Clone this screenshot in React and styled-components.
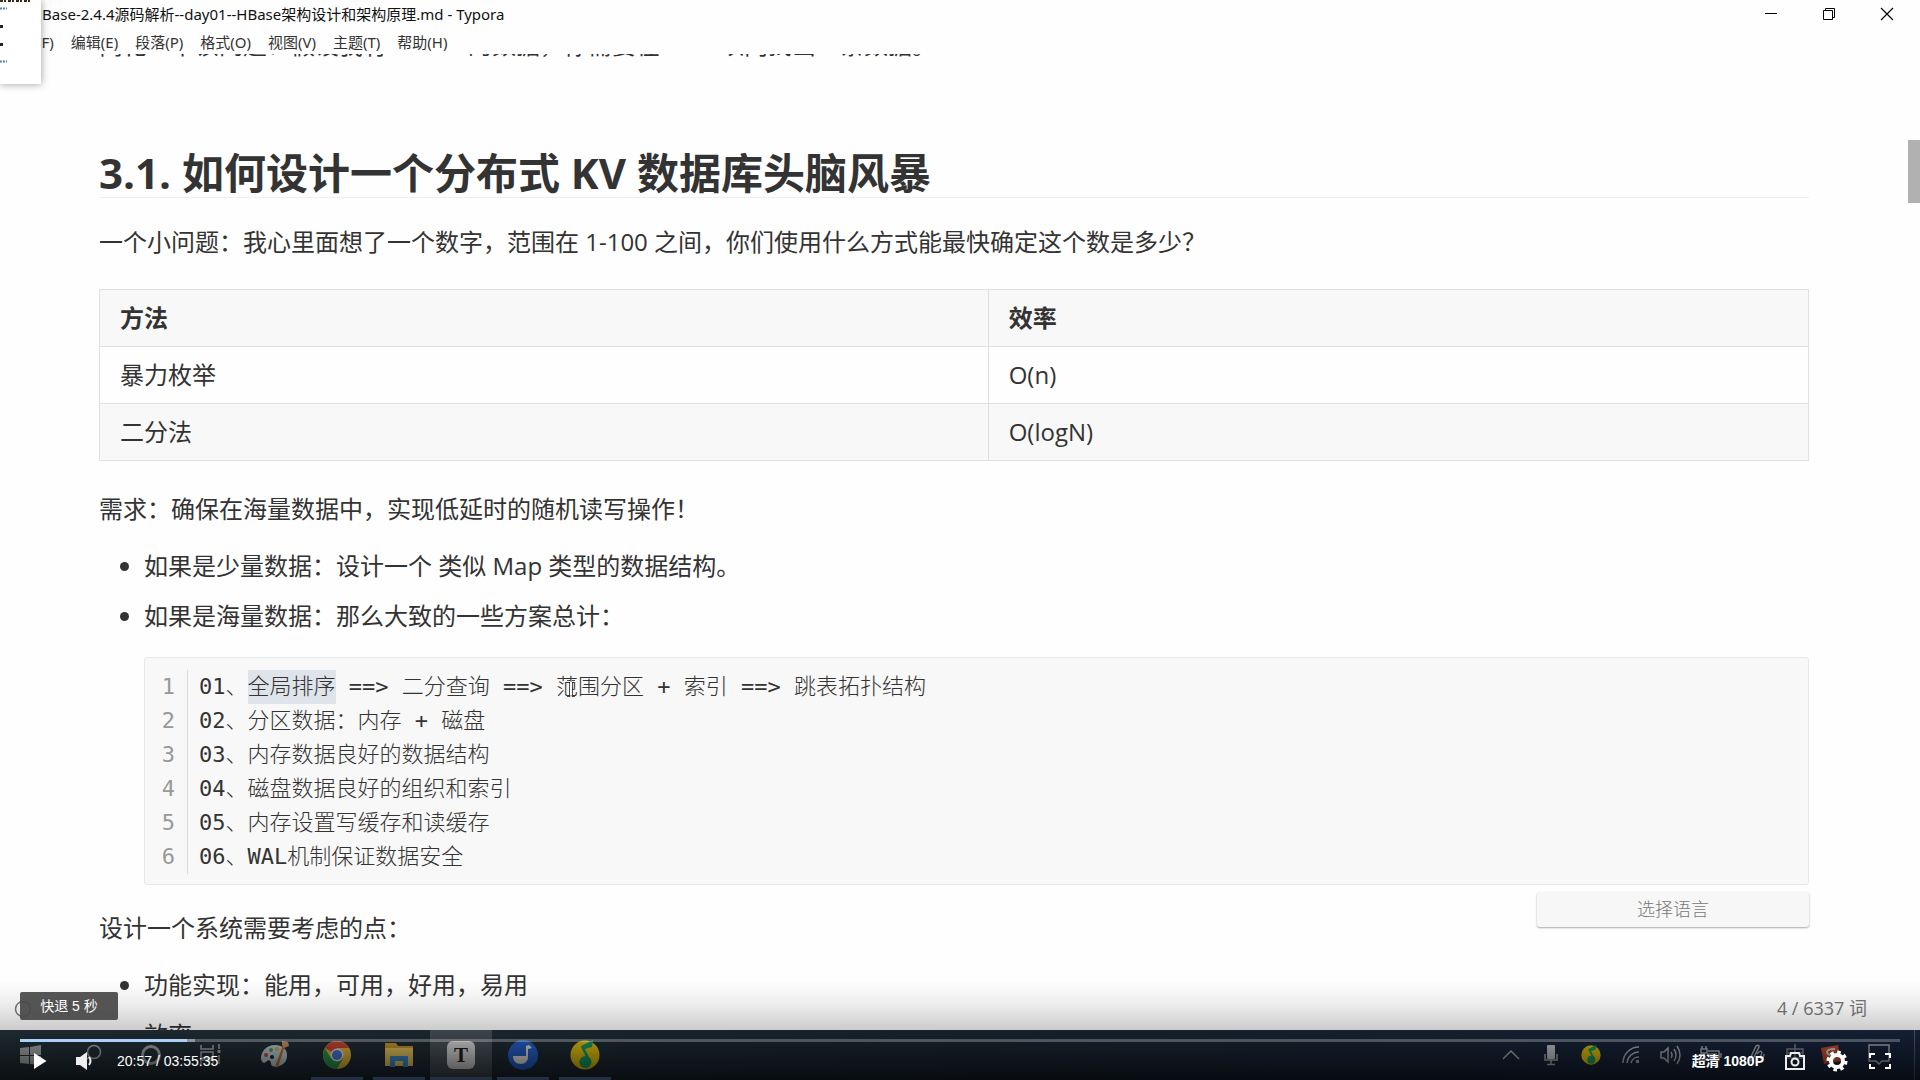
import React from 'react';
import styled, { createGlobalStyle, css } from 'styled-components';

const GlobalStyle = createGlobalStyle`
  * {
    box-sizing: border-box;
  }
  body {
    margin: 0;
    background: #fefefe;
    color: #333;
    font-family: "Open Sans", "Noto Sans CJK SC", sans-serif;
  }
  button {
    border: 0;
    padding: 0;
    background: none;
    color: inherit;
    font: inherit;
    display: flex;
    align-items: center;
    justify-content: center;
  }
`;

const Screen = styled.div`
  position: relative;
  display: flex;
  flex-direction: column;
  height: 100vh;
  overflow: hidden;
`;

/* ---------- editor window ---------- */

const TitleBar = styled.header`
  display: flex;
  align-items: center;
  justify-content: space-between;
  height: 30px;
  flex: none;
  padding: 0 4px 2px 31px;
  color: #111;
  font: 15px/28px "Noto Sans", "Noto Sans CJK SC", sans-serif;
`;

const WindowButtons = styled.div`
  display: flex;
  button {
    width: 58px;
    height: 28px;
  }
`;

const MenuBar = styled.nav`
  display: flex;
  gap: 17px;
  flex: none;
  height: 24px;
  padding-left: 7px;
  font: 15px/24px "Noto Sans", "Noto Sans CJK SC", sans-serif;
  color: #333;
`;

const Viewport = styled.main`
  position: relative;
  flex: 1;
  min-height: 0;
  overflow: hidden;
`;

const Article = styled.article`
  margin: -28px 111px 0 99px;
  font-size: 24px;
  line-height: 38px;
`;

const Paragraph = styled.p`
  margin: 0;
`;

const Heading = styled.h2`
  margin: 85px 0 25px;
  border-bottom: 1px solid #eee;
  font-size: 42px;
  line-height: 48px;
  font-weight: 700;
`;

const Table = styled.table`
  width: 100%;
  margin: 28px 0 29px;
  border-collapse: collapse;
  border: 1px solid #dfe2e5;
  th,
  td {
    height: 57px;
    padding: 9px 20px;
    border: 1px solid #dfe2e5;
    text-align: left;
  }
  th:first-child {
    width: 52%;
  }
  th,
  tbody tr:nth-child(2n) {
    background: #f8f8f8;
  }
`;

const List = styled.ul`
  margin: 19px 0 0;
  padding-left: 45px;
  li + li {
    margin-top: 12px;
  }
`;

const CodeArea = styled.div`
  position: relative;
  margin: 22px 0 24px 45px;
`;

const CodeBox = styled.div`
  display: flex;
  padding: 12px 0 10px;
  border: 1px solid #e7eaed;
  border-radius: 3px;
  background: #f8f8f8;
  font: 300 22px/34px "DejaVu Sans Mono", "Noto Sans CJK SC", monospace;
`;

const LineNumbers = styled.div`
  width: 43px;
  padding-right: 12px;
  border-right: 1px solid #ddd;
  color: #999;
  text-align: right;
`;

const CodeLines = styled.pre`
  margin: 0;
  padding-left: 11px;
  font: inherit;
  div {
    height: 34px;
  }
`;

const Selected = styled.span`
  display: inline-block;
  height: 34px;
  background: #dfe3ea;
`;

const Cursor = styled.svg`
  position: absolute;
  left: 422px;
  top: 23px;
`;

const LanguageInput = styled.input`
  position: absolute;
  right: 0;
  top: 100%;
  width: 272px;
  height: 35px;
  margin-top: 7px;
  padding: 0 0 4px;
  border: 0;
  border-radius: 3px;
  background: #f7f7f8;
  box-shadow: 0 1px 2px rgba(0, 0, 0, 0.35);
  color: #777;
  font: 300 18px/30px "Noto Sans CJK SC", sans-serif;
  text-align: center;
`;

const ScrollThumb = styled.div`
  position: absolute;
  right: 0;
  top: 86px;
  width: 12px;
  height: 63px;
  background: #b1b1b1;
`;

const WordCount = styled.div`
  position: absolute;
  right: 53px;
  bottom: 7px;
  color: #777;
  font: 18px/30px "Open Sans", "Noto Sans CJK SC", sans-serif;
`;

const OutlineToggle = styled.svg`
  position: absolute;
  left: 14px;
  bottom: 12px;
`;

const CornerPanel = styled.div`
  position: absolute;
  left: 0;
  top: 0;
  width: 41px;
  height: 84px;
  background: #fff;
  box-shadow: 0 0 8px rgba(0, 0, 0, 0.4);
`;

/* ---------- taskbar ---------- */

const Taskbar = styled.footer`
  display: flex;
  justify-content: space-between;
  flex: none;
  height: 50px;
  background: linear-gradient(90deg, #25343b, #1c2935 50%, #192742);
`;

const Group = styled.div`
  display: flex;
`;

const TaskButton = styled.button`
  position: relative;
  width: ${(p) => (p.$system ? 61 : 62)}px;
  height: 50px;
  padding-bottom: 1px;
  background: ${(p) => (p.$active ? '#4d565d' : 'none')};
  ${(p) =>
    p.$running &&
    css`
      &::after {
        content: "";
        position: absolute;
        bottom: 0;
        left: ${p.$active ? 0 : 5}px;
        right: ${p.$active ? 0 : 5}px;
        height: 3px;
        background: #6b96d4;
      }
    `}
`;

const TrayButton = styled.button`
  width: ${(p) => p.$width || 40}px;
  height: 50px;
`;

const ShowDesktop = styled.div`
  width: 6px;
  margin-left: 9px;
  border-left: 1px solid #566174;
`;

/* ---------- video player ---------- */

const Shade = styled.div`
  position: absolute;
  left: 0;
  right: 0;
  bottom: 0;
  height: 100px;
  background: linear-gradient(
    rgba(0, 0, 0, 0),
    rgba(0, 0, 0, 0.07) 25%,
    rgba(0, 0, 0, 0.2) 50%,
    rgba(0, 0, 0, 0.7)
  );
`;

const Player = styled.section`
  position: absolute;
  left: 0;
  right: 0;
  bottom: 0;
  color: #fff;
  font-family: "Liberation Sans", "Noto Sans CJK SC", sans-serif;
`;

const Tip = styled.div`
  width: 98px;
  height: 28px;
  margin: 0 0 19px 20px;
  border-radius: 2px;
  background: rgba(72, 72, 72, 0.93);
  font-size: 14px;
  line-height: 28px;
  text-align: center;
`;

const Track = styled.div`
  height: 3px;
  margin: 0 20px;
  background: rgba(255, 255, 255, 0.25);
`;

const Buffered = styled.div`
  height: 3px;
  background: #8d979c;
`;

const Played = styled.div`
  height: 3px;
  background: #a9d0fa;
`;

const Controls = styled.div`
  display: flex;
  align-items: center;
  justify-content: space-between;
  height: 38px;
  padding: 0 29px 0 34px;
`;

const ControlGroup = styled.div`
  display: flex;
  align-items: center;
  gap: ${(p) => p.$gap}px;
`;

const Time = styled.span`
  font-size: 14px;
  margin-left: -4px;
`;

const Quality = styled.button`
  font-size: 14px;
  line-height: 16px;
  font-weight: 700;
`;

function MusicIcon({ size }) {
  return (
    <svg width={size} height={size} viewBox="0 0 30 30">
      <circle cx="15" cy="15" r="14.5" fill="#f5d010" />
      <path d="M11 6l12-6-1 7-7 2 6 12-4-2-6-12z" fill="#18a86b" />
      <circle cx="15.500" cy="22" r="6" fill="#18a86b" />
    </svg>
  );
}

const systemApps = [
  {
    name: '开始',
    icon: (
      <svg width="22" height="20" viewBox="0 0 22 20" fill="#b5b8ba">
        <path d="M0 3l9-1v8H0zM10 2l11-2v10H10zM0 11h9v8l-9-1zM10 11h11v9l-11-1z" />
      </svg>
    ),
  },
  {
    name: '搜索',
    icon: (
      <svg width="22" height="22" viewBox="0 0 22 22" fill="none" stroke="#b5b8ba" strokeWidth="1.5">
        <circle cx="13" cy="8" r="6.500" />
        <path d="M8 13l-7 7" />
      </svg>
    ),
  },
  {
    name: 'Cortana',
    icon: (
      <svg width="24" height="24" viewBox="0 0 24 24" fill="none">
        <circle cx="10" cy="12" r="8.500" stroke="#aeb2b4" strokeWidth="3" />
      </svg>
    ),
  },
  {
    name: '任务视图',
    icon: (
      <svg width="28" height="22" viewBox="0 0 28 22" fill="none" stroke="#b5b8ba" strokeWidth="1.500">
        <path d="M1 1v4h12V1M1 20v-4h12v4M1 8h12v6H1zM19 0v5M19 11v9" />
        <path d="M17.500 6h3v3h-3z" fill="#b5b8ba" stroke="none" />
      </svg>
    ),
  },
];

const apps = [
  {
    name: '画图',
    icon: (
      <svg width="30" height="30" viewBox="0 0 30 30">
        <path d="M15 5C6 5 1 12 1 18c0 5 4 6 6 3 2-2 4 0 4 3 1 5 15 3 16-7 1-8-5-12-12-12z" fill="#c9dce6" />
        <circle cx="6" cy="15" r="2" fill="#cf4b3e" />
        <circle cx="11" cy="10" r="2" fill="#5da84c" />
        <circle cx="17" cy="9" r="2" fill="#e7b53c" />
        <circle cx="12" cy="17" r="2" fill="#1c2a32" />
        <path d="M25 6l-7 21-2 1V24L23 5z" fill="#c97b34" />
        <path d="M22 1l6 1 1 4-5 2-2-3z" fill="#d8a068" />
      </svg>
    ),
  },
  {
    name: 'Chrome',
    running: true,
    icon: (
      <svg width="28" height="28" viewBox="0 0 28 28">
        <circle cx="14" cy="14" r="14" fill="#f4c63b" />
        <path d="M14 14L1.900 7A14 14 0 0 1 26.100 7H14z" fill="#dc4a3d" />
        <path d="M1.900 7A14 14 0 0 0 14 28l6-10.500L14 14l-6 3.500z" fill="#2da155" />
        <circle cx="14" cy="14" r="6.500" fill="#f4f4f4" />
        <circle cx="14" cy="14" r="5" fill="#4a80e8" />
      </svg>
    ),
  },
  {
    name: '文件资源管理器',
    running: true,
    icon: (
      <svg width="28" height="26" viewBox="0 0 28 26">
        <path d="M0 1h11l2 3h15v19H0z" fill="#d9a229" />
        <path d="M0 6h28v18H0z" fill="#fbd568" />
        <path d="M5 14h18v11h-5v-6h-8v6H5z" fill="#3f96dc" />
      </svg>
    ),
  },
  {
    name: 'Typora',
    running: true,
    active: true,
    icon: (
      <svg width="28" height="28" viewBox="0 0 28 28">
        <rect width="28" height="28" rx="6" fill="#e6e6e6" />
        <text x="14" y="21" textAnchor="middle" fontFamily="Liberation Serif, serif" fontWeight="700" fontSize="21" fill="#222">
          T
        </text>
      </svg>
    ),
  },
  {
    name: '音乐',
    running: true,
    icon: (
      <svg width="30" height="30" viewBox="0 0 30 30">
        <circle cx="15" cy="15" r="15" fill="#2868d8" />
        <path d="M5 16h13V6l3-1 3 3-4 1v8c0 4-3 7-7 7-5 0-8-3-8-8z" fill="#f2f2f2" />
      </svg>
    ),
  },
  { name: 'QQ音乐', running: true, icon: <MusicIcon size={30} /> },
];

const line = { fill: 'none', stroke: '#b9bec5', strokeWidth: 1.5 };

const tray = [
  {
    name: '显示隐藏的图标',
    icon: (
      <svg width="18" height="12" viewBox="0 0 18 12" {...line}>
        <path d="M1 10l8-8 8 8" />
      </svg>
    ),
  },
  {
    name: '麦克风',
    icon: (
      <svg width="14" height="22" viewBox="0 0 14 22" {...line}>
        <rect x="3" y="1" width="8" height="14" rx="1" fill="#d3d7dc" stroke="none" />
        <path d="M1 10v6h12v-6M7 16v4M3 20.500h8" />
      </svg>
    ),
  },
  { name: 'QQ音乐', icon: <MusicIcon size={20} /> },
  {
    name: '网络',
    icon: (
      <svg width="18" height="18" viewBox="0 0 18 18" {...line}>
        <path d="M1 17A16 16 0 0 1 17 1M5 17A12 12 0 0 1 17 6M9 17A8 8 0 0 1 17 11" />
        <circle cx="15.500" cy="15.500" r="1" />
      </svg>
    ),
  },
  {
    name: '音量',
    icon: (
      <svg width="22" height="20" viewBox="0 0 22 20" {...line}>
        <path d="M1 7h3l4-4v14l-4-4H1zM11 7q2 3 0 6M14 4q4 6 0 12M17 1q6 9 0 18" />
      </svg>
    ),
  },
  {
    name: '电池',
    icon: (
      <svg width="22" height="18" viewBox="0 0 22 18" {...line}>
        <path d="M8 5h11v9H5v-4M19 8h2v3h-2" />
        <path d="M8 7h9v5H8z" fill="#7f8790" stroke="none" />
        <path d="M1 3h6v4H1zM2 3V0M6 3V0M4 7v4" />
      </svg>
    ),
  },
  {
    name: '手写笔',
    width: 50,
    icon: (
      <svg width="18" height="22" viewBox="0 0 18 22" {...line}>
        <path d="M3 15L9 2q3-2 3 1L6 15l-3 2zM10 10q4-5 5-1-3 6-1 5 3 0 3-4" />
      </svg>
    ),
  },
  {
    name: '输入法',
    width: 28,
    icon: (
      <svg width="20" height="22" viewBox="0 0 20 22" {...line} opacity="0.7">
        <path d="M10 0v14M2 5h16v9H2zM2 9h16" />
      </svg>
    ),
  },
  {
    name: '搜狗输入法',
    width: 44,
    icon: (
      <svg width="22" height="22" viewBox="0 0 22 22">
        <path d="M1 4l17-3 3 16-17 3z" fill="#d9562f" />
        <path d="M15 5q-8 0-8 3t5 3q5 1 1 4l-6 1" fill="none" stroke="#eee" strokeWidth="2" />
      </svg>
    ),
  },
  {
    name: '通知',
    width: 52,
    icon: (
      <svg width="22" height="22" viewBox="0 0 22 22" {...line}>
        <path d="M1 1h20v16h-7l-3 3-3-3H1z" />
      </svg>
    ),
  },
];

const codeLines = [
  <>
    01、<Selected>全局排序</Selected> ==&gt; 二分查询 ==&gt; 范围分区 + 索引 ==&gt; 跳表拓扑结构
  </>,
  '02、分区数据：内存 + 磁盘',
  '03、内存数据良好的数据结构',
  '04、磁盘数据良好的组织和索引',
  '05、内存设置写缓存和读缓存',
  '06、WAL机制保证数据安全',
];

const menus = ['文件(F)', '编辑(E)', '段落(P)', '格式(O)', '视图(V)', '主题(T)', '帮助(H)'];

function Editor() {
  return (
    <>
      <TitleBar>
        <span>HBase-2.4.4源码解析--day01--HBase架构设计和架构原理.md - Typora</span>
        <WindowButtons>
          <button aria-label="最小化">
            <svg width="14" height="14" viewBox="0 0 14 14">
              <path d="M1 6.500h12" stroke="#000" />
            </svg>
          </button>
          <button aria-label="还原">
            <svg width="14" height="14" viewBox="0 0 14 14" fill="none" stroke="#000">
              <path d="M1.500 3.500h9v9h-9zM3.500 3.500v-2h9v9h-2" />
            </svg>
          </button>
          <button aria-label="关闭">
            <svg width="14" height="14" viewBox="0 0 14 14">
              <path d="M1 1l12 12M13 1L1 13" stroke="#000" strokeWidth="1.200" />
            </svg>
          </button>
        </WindowButtons>
      </TitleBar>
      <MenuBar>
        {menus.map((m) => (
          <button key={m}>{m}</button>
        ))}
      </MenuBar>
      <Viewport>
        <Article>
          <Paragraph>简化一下该问题：假设我有 10000 的数据，你需要在 1ms 以内找出一条数据。</Paragraph>
          <Heading>3.1. 如何设计一个分布式 KV 数据库头脑风暴</Heading>
          <Paragraph>一个小问题：我心里面想了一个数字，范围在 1-100 之间，你们使用什么方式能最快确定这个数是多少？</Paragraph>
          <Table>
            <thead>
              <tr>
                <th>方法</th>
                <th>效率</th>
              </tr>
            </thead>
            <tbody>
              <tr>
                <td>暴力枚举</td>
                <td>O(n)</td>
              </tr>
              <tr>
                <td>二分法</td>
                <td>O(logN)</td>
              </tr>
            </tbody>
          </Table>
          <Paragraph>需求：确保在海量数据中，实现低延时的随机读写操作！</Paragraph>
          <List>
            <li>如果是少量数据：设计一个 类似 Map 类型的数据结构。</li>
            <li>如果是海量数据：那么大致的一些方案总计：</li>
          </List>
          <CodeArea>
            <CodeBox>
              <LineNumbers>
                {codeLines.map((_, i) => (
                  <div key={i}>{i + 1}</div>
                ))}
              </LineNumbers>
              <CodeLines>
                {codeLines.map((text, i) => (
                  <div key={i}>{text}</div>
                ))}
              </CodeLines>
            </CodeBox>
            <Cursor width="10" height="17" viewBox="0 0 10 17" fill="none" stroke="#222">
              <path d="M4 1h2v15H4z" fill="#fff" stroke="none" />
              <path d="M1 .5h3l1 1 1-1h3M1 16.500h3l1-1 1 1h3M3.500 2v13M6.500 2v13" strokeWidth="0.800" />
            </Cursor>
            <LanguageInput aria-label="选择语言" defaultValue="选择语言" />
          </CodeArea>
          <Paragraph>设计一个系统需要考虑的点：</Paragraph>
          <List>
            <li>功能实现：能用，可用，好用，易用</li>
            <li>效率</li>
          </List>
        </Article>
        <ScrollThumb />
        <OutlineToggle width="60" height="18" viewBox="0 0 60 18" fill="none" stroke="#777" strokeWidth="1.500">
          <circle cx="9" cy="9" r="7.500" />
          <path d="M52 4l-4 5 4 5M56 2l-2 14" />
        </OutlineToggle>
        <WordCount>4 / 6337 词</WordCount>
      </Viewport>
      <CornerPanel>
        <svg width="41" height="84" viewBox="0 0 41 84">
          <path d="M0 1h32" stroke="#3a2a20" strokeWidth="2" strokeDasharray="3 1 2 2" />
          <path d="M0 8.500h7M0 61.500h7" stroke="#4d87ad" strokeWidth="2" strokeDasharray="2 1" />
          <path d="M0 26.500h3M0 44.500h3" stroke="#222" strokeWidth="3" />
        </svg>
      </CornerPanel>
    </>
  );
}

function VideoPlayer() {
  const buffered = 9.3;
  const played = 95.4;
  return (
    <Player>
      <Tip>快退 5 秒</Tip>
      <Track>
        <Buffered style={{ width: `${buffered}%` }}>
          <Played style={{ width: `${played}%` }} />
        </Buffered>
      </Track>
      <Controls>
        <ControlGroup $gap={29}>
          <button aria-label="播放">
            <svg width="13" height="16" viewBox="0 0 13 16" fill="#fff">
              <path d="M0 0l12.500 8L0 16z" />
            </svg>
          </button>
          <button aria-label="音量">
            <svg width="16" height="18" viewBox="0 0 16 18" fill="#eee">
              <path d="M0 5h4l7-5v18l-7-5H0z" />
              <path d="M13 5q3 4 0 8" fill="none" stroke="#eee" strokeWidth="2" />
            </svg>
          </button>
          <Time>20:57 / 03:55:35</Time>
        </ControlGroup>
        <ControlGroup $gap={21}>
          <Quality>超清 1080P</Quality>
          <button aria-label="截图">
            <svg width="20" height="18" viewBox="0 0 20 18" fill="none" stroke="#eee" strokeWidth="2">
              <path d="M1 4h4l1-3h8l1 3h4v13H1z" />
              <circle cx="10" cy="10" r="3.500" />
            </svg>
          </button>
          <button aria-label="设置">
            <svg width="22" height="22" viewBox="0 0 22 22" fill="none" stroke="#fff">
              <circle cx="11" cy="11" r="6" strokeWidth="4" />
              <circle cx="11" cy="11" r="9" strokeWidth="3" strokeDasharray="3.530 3.530" />
            </svg>
          </button>
          <button aria-label="全屏">
            <svg width="22" height="16" viewBox="0 0 22 16" fill="none" stroke="#fff" strokeWidth="2">
              <path d="M1 5V1h5M16 1h5v4M21 11v4h-5M6 15H1v-4" />
            </svg>
          </button>
        </ControlGroup>
      </Controls>
    </Player>
  );
}

export default function App() {
  return (
    <Screen>
      <GlobalStyle />
      <Editor />
      <Taskbar>
        <Group>
          {systemApps.map((a) => (
            <TaskButton key={a.name} aria-label={a.name} $system>
              {a.icon}
            </TaskButton>
          ))}
          {apps.map((a) => (
            <TaskButton key={a.name} aria-label={a.name} $running={a.running} $active={a.active}>
              {a.icon}
            </TaskButton>
          ))}
        </Group>
        <Group>
          {tray.map((t) => (
            <TrayButton key={t.name} aria-label={t.name} $width={t.width}>
              {t.icon}
            </TrayButton>
          ))}
          <ShowDesktop />
        </Group>
      </Taskbar>
      <Shade />
      <VideoPlayer />
    </Screen>
  );
}
